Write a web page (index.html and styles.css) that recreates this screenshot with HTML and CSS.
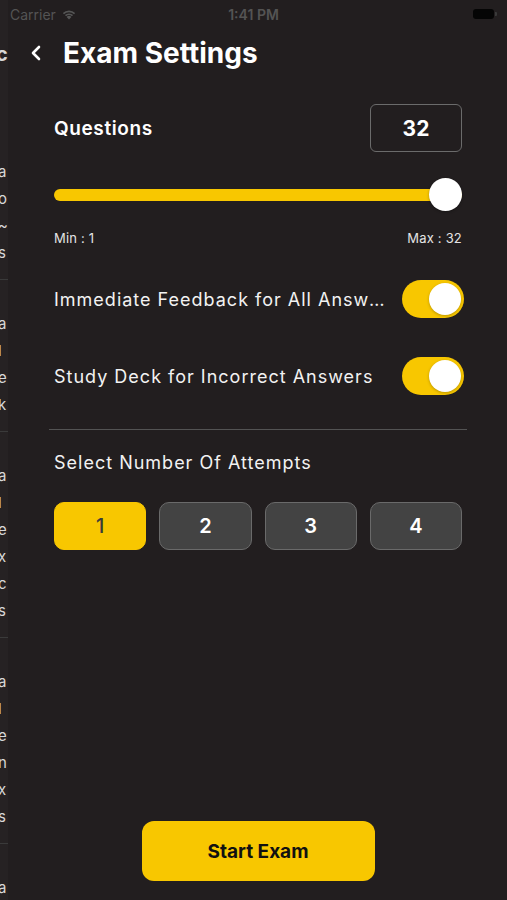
FILE: index.html
```html
<!DOCTYPE html>
<html lang="en">
<head>
  <meta charset="UTF-8" />
  <meta name="viewport" content="width=device-width, initial-scale=1.0"/>
  <title>Exam Settings</title>
  <link rel="stylesheet" href="styles.css">
</head>
<body>

  <div class="screen">
    <!-- the list screen underneath, only its last column still shows -->
    <div class="behind">
      <div class="behind-head">c</div>
      <div class="behind-group first">
        <span>a</span><span>o</span><span>~</span><span>s</span>
      </div>
      <div class="behind-group">
        <span>a</span><span>l</span><span>e</span><span>k</span>
      </div>
      <div class="behind-group">
        <span>a</span><span>l</span><span>e</span><span>x</span><span>c</span><span>s</span>
      </div>
      <div class="behind-group">
        <span>a</span><span>l</span><span>e</span><span>n</span><span>x</span><span>s</span>
      </div>
      <div class="behind-group">
        <span>a</span>
      </div>
    </div>

    <div class="main">
      <div class="status-bar">
        <div class="carrier">
          Carrier
          <svg class="wifi" width="16" height="12" viewBox="0 0 16 12">
            <path d="M8 11.5 L5.6 8.9 A3.4 3.4 0 0 1 10.4 8.9 Z" fill="#555"/>
            <path d="M3.9 7.1 A5.9 5.9 0 0 1 12.1 7.1 L10.9 8.3 A4.2 4.2 0 0 0 5.1 8.3 Z" fill="#555"/>
            <path d="M1.8 5 A8.9 8.9 0 0 1 14.2 5 L13 6.2 A7.2 7.2 0 0 0 3 6.2 Z" fill="#555"/>
          </svg>
        </div>
        <div class="time">1:41 PM</div>
        <div class="battery"><span class="battery-body"></span><span class="battery-cap"></span></div>
      </div>

      <div class="header">
        <svg class="back" width="12" height="16" viewBox="0 0 12 16">
          <path d="M9 2 L3 8 L9 14" fill="none" stroke="#fff" stroke-width="2.6" stroke-linecap="round" stroke-linejoin="round"/>
        </svg>
        <h1>Exam Settings</h1>
      </div>

      <div class="questions-row">
        <span class="questions-label">Questions</span>
        <div class="count-box">32</div>
      </div>

      <div class="slider">
        <div class="track"><div class="fill" style="width: 100%"></div></div>
        <div class="thumb"></div>
      </div>
      <div class="range-labels">
        <span>Min : 1</span>
        <span>Max : 32</span>
      </div>

      <div class="option-row first">
        <span class="option-label">Immediate Feedback for All Answers</span>
        <div class="toggle on"><span class="knob"></span></div>
      </div>
      <div class="option-row">
        <span class="option-label">Study Deck for Incorrect Answers</span>
        <div class="toggle on"><span class="knob"></span></div>
      </div>

      <hr class="divider" />

      <div class="section-label">Select Number Of Attempts</div>
      <div class="attempts">
        <button class="attempt active">1</button>
        <button class="attempt">2</button>
        <button class="attempt">3</button>
        <button class="attempt">4</button>
      </div>

      <div class="footer">
        <button class="start-btn">Start Exam</button>
      </div>
    </div>
  </div>

</body>
</html>
```

FILE: styles.css
```css
body {
  margin: 0;
  background-color: #221e1f;
  font-family: Inter, "Noto Sans", sans-serif;
  color: #f2f2f2;
}

.screen {
  display: flex;
  height: 900px;
  overflow: hidden;
}

/* sliver of the previous screen */
.behind {
  width: 8px;
  flex-shrink: 0;
  overflow: hidden;
  background-color: #262223;
  font-size: 15px;
  color: #d8d8d8;
}

.behind-head {
  margin-top: 42px;
  margin-left: -4px;
  font-size: 20px;
  line-height: 24px;
  font-weight: 700;
}

.behind-group {
  display: flex;
  flex-direction: column;
  gap: 9px;
  padding: 35px 0 17px;
  border-top: 1px solid #3a3a3a;
  margin-left: -2px;
}

.behind-group.first {
  border-top: none;
  margin-top: 62px;
}

.behind-group span {
  line-height: 18px;
}

.main {
  flex: 1;
  min-width: 0;
  display: flex;
  flex-direction: column;
  padding: 0 45px 0 46px;
}

.status-bar {
  height: 28px;
  margin: 0 -35px 0 -44px;
  display: flex;
  align-items: center;
  justify-content: space-between;
  color: #545454;
  font-size: 14px;
}

.carrier {
  display: flex;
  align-items: center;
  gap: 5px;
  width: 90px;
}

.time {
  font-weight: 600;
}

.battery {
  width: 90px;
  display: flex;
  justify-content: flex-end;
  align-items: center;
}

.battery-body {
  width: 21px;
  height: 10px;
  border-radius: 3px;
  background-color: #050505;
}

.battery-cap {
  width: 2px;
  height: 4px;
  margin-left: 1px;
  border-radius: 0 1px 1px 0;
  background-color: #3a3a3a;
}

.header {
  height: 50px;
  display: flex;
  align-items: center;
  margin-left: -24px;
}

.back {
  margin-right: 21px;
}

h1 {
  margin: 0;
  font-size: 28px;
  font-weight: 700;
  color: #fff;
}

.questions-row {
  margin-top: 26px;
  display: flex;
  justify-content: space-between;
  align-items: center;
}

.questions-label {
  font-size: 19px;
  font-weight: 600;
  letter-spacing: 0.6px;
  color: #fff;
}

.count-box {
  width: 90px;
  height: 46px;
  border: 1px solid #6b6b6b;
  border-radius: 6px;
  display: flex;
  align-items: center;
  justify-content: center;
  font-size: 21px;
  font-weight: 700;
  color: #fff;
}

.slider {
  position: relative;
  margin-top: 26px;
  height: 34px;
  display: flex;
  align-items: center;
}

.track {
  flex: 1;
  height: 12px;
  border-radius: 6px;
  background-color: #4a4a4a;
  overflow: hidden;
}

.fill {
  height: 100%;
  background-color: #f8c700;
}

.thumb {
  position: absolute;
  right: 0;
  top: 0;
  width: 33px;
  height: 33px;
  border-radius: 50%;
  background-color: #fff;
  box-shadow: 0 1px 3px rgba(0, 0, 0, 0.3);
}

.range-labels {
  margin-top: 18px;
  display: flex;
  justify-content: space-between;
  font-size: 13px;
  line-height: 16px;
  letter-spacing: 0.2px;
  color: #e4e4e4;
}

.option-row {
  display: flex;
  align-items: center;
  gap: 14px;
  margin-top: 39px;
  margin-right: -2px;
}

.option-row.first {
  margin-top: 34px;
}

.option-label {
  flex: 1;
  min-width: 0;
  font-size: 18px;
  letter-spacing: 1px;
  white-space: nowrap;
  overflow: hidden;
  text-overflow: ellipsis;
}

.toggle {
  width: 62px;
  height: 38px;
  flex-shrink: 0;
  border-radius: 19px;
  background-color: #4a4a4a;
  display: flex;
  align-items: center;
  padding: 0 3px;
  box-sizing: border-box;
}

.toggle.on {
  background-color: #f8c700;
  justify-content: flex-end;
}

.knob {
  width: 32px;
  height: 32px;
  border-radius: 50%;
  background-color: #fff;
  box-shadow: 0 1px 3px rgba(0, 0, 0, 0.25);
}

.divider {
  margin: 34px -5px 0;
  border: none;
  border-top: 1px solid #535353;
}

.section-label {
  margin-top: 21px;
  font-size: 18px;
  line-height: 24px;
  letter-spacing: 1px;
}

.attempts {
  margin-top: 27px;
  display: grid;
  grid-template-columns: repeat(4, 1fr);
  gap: 13px;
}

.attempt {
  height: 48px;
  border-radius: 10px;
  border: 1px solid #6a6a6a;
  background-color: #434343;
  color: #fff;
  font-family: Inter, sans-serif;
  font-size: 20px;
  font-weight: 600;
  cursor: pointer;
}

.attempt.active {
  background-color: #f8c700;
  border-color: #f8c700;
  color: #3b3b3b;
  font-weight: 500;
}

.footer {
  margin-top: auto;
  padding-bottom: 19px;
  display: flex;
  justify-content: center;
}

.start-btn {
  width: 233px;
  height: 60px;
  border: none;
  border-radius: 12px;
  background-color: #f8c700;
  color: #111;
  font-family: Inter, sans-serif;
  font-size: 19px;
  font-weight: 700;
  cursor: pointer;
}
```
